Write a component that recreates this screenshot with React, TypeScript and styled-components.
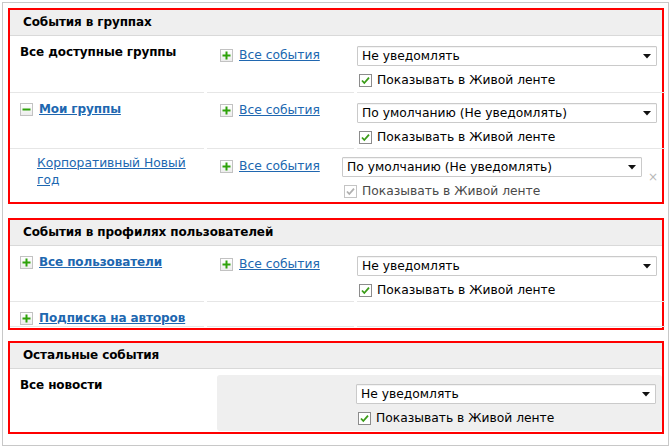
import React from "react";
import styled, { createGlobalStyle } from "styled-components";

const GlobalStyle = createGlobalStyle`
  html, body { margin: 0; padding: 0; background: #fff; }
  body {
    font-family: "DejaVu Sans", Verdana, sans-serif;
    font-size: 12.3px;
    color: #000;
  }
`;

const Page = styled.div`
  padding: 2px 0 0 2px;
`;

const Frame = styled.div`
  box-sizing: border-box;
  width: 667px;
  height: 444px;
  border: 1px solid #c8c8c8;
  padding: 5px 4px 0 5px;
`;

const Section = styled.section<{ $gap: number }>`
  border: 2px solid #ff0000;
  margin-bottom: ${(p) => p.$gap}px;
`;

const Header = styled.div`
  height: 25px;
  line-height: 25px;
  background: #efefef;
  border-bottom: 1px solid #d9d9d9;
  padding-left: 13px;
  font-weight: bold;
  font-size: 12px;
  letter-spacing: -0.1px;
`;

const Row = styled.div<{ $h: number }>`
  display: grid;
  grid-template-columns: 194px 147px 308px;
  column-gap: 3px;
  height: ${(p) => p.$h}px;
  box-sizing: border-box;
`;

const Cell = styled.div<{ $line?: boolean; $pl?: number; $pt?: number }>`
  box-sizing: border-box;
  padding-left: ${(p) => p.$pl ?? 0}px;
  padding-top: ${(p) => p.$pt ?? 0}px;
  border-bottom: 1px solid ${(p) => (p.$line ? "#e6e6e6" : "transparent")};
`;

const Title = styled.span`
  font-weight: bold;
  font-size: 12px;
  letter-spacing: -0.1px;
  line-height: 16px;
`;

const Link = styled.a<{ $bold?: boolean }>`
  color: #2067b0;
  text-decoration: underline;
  font-weight: ${(p) => (p.$bold ? "bold" : "normal")};
  font-size: ${(p) => (p.$bold ? "12px" : "inherit")};
  letter-spacing: ${(p) => (p.$bold ? "-0.1px" : "0")};
  line-height: 16px;
  cursor: pointer;
`;

const IconLine = styled.div`
  display: flex;
  align-items: center;
  gap: 6px;
  height: 16px;
`;

const WrapLink = styled(Link)`
  display: block;
  max-width: 158px;
  line-height: 17px;
`;

const ToggleBox = styled.span`
  display: inline-flex;
  width: 13px;
  height: 13px;
  box-sizing: border-box;
  border: 1px solid #c2c2c2;
  background: linear-gradient(#ffffff, #ededed);
  align-items: center;
  justify-content: center;
  flex: none;
`;

const Controls = styled.div<{ $shift?: number }>`
  margin-left: ${(p) => -(p.$shift ?? 0)}px;
  display: flex;
  flex-direction: column;
  gap: 7px;
`;

const SelectLine = styled.div`
  display: flex;
  align-items: flex-end;
`;

const SelectBox = styled.div`
  box-sizing: border-box;
  width: 300px;
  height: 20px;
  border: 1px solid #cacaca;
  border-radius: 1px;
  background: #fff;
  display: flex;
  align-items: center;
  justify-content: space-between;
  padding: 0 5px 0 4px;
  line-height: 18px;
  box-shadow: inset 0 1px 0 #f3f3f3;
`;

const Remove = styled.span`
  color: #b8b8b8;
  font-size: 12px;
  margin-left: 6px;
  margin-bottom: -6px;
  line-height: 12px;
`;

const CheckLine = styled.label<{ $disabled?: boolean }>`
  display: flex;
  align-items: center;
  gap: 5px;
  height: 14px;
  padding-left: 2px;
  color: ${(p) => (p.$disabled ? "#4a4a4a" : "#000")};
`;

const GrayPanel = styled.div`
  grid-column: 2 / 4;
  margin: 6px 3px 0 10px;
  background: #efefef;
  border-radius: 3px;
  padding: 9px 0 0 139px;
  height: 56px;
  box-sizing: border-box;
`;

const Plus = () => (
  <ToggleBox>
    <svg width="9" height="9" viewBox="0 0 9 9">
      <path d="M4.5 0.5V8.5M0.5 4.5H8.5" stroke="#2ea20a" strokeWidth="2" />
    </svg>
  </ToggleBox>
);

const Minus = () => (
  <ToggleBox>
    <svg width="9" height="9" viewBox="0 0 9 9">
      <path d="M0.5 4.5H8.5" stroke="#2ea20a" strokeWidth="2" />
    </svg>
  </ToggleBox>
);

const Arrow = () => (
  <svg width="8" height="5" viewBox="0 0 8 5">
    <path d="M0 0H8L4 4.5Z" fill="#111" />
  </svg>
);

const Check = ({ disabled }: { disabled?: boolean }) => (
  <svg width="13" height="13" viewBox="0 0 13 13" style={{ flex: "none" }}>
    <rect
      x="0.5"
      y="0.5"
      width="12"
      height="12"
      fill="#fff"
      stroke={disabled ? "#c4c4c4" : "#8c8c8c"}
    />
    <path
      d="M3 6.5L5.3 9L10 3.6"
      fill="none"
      stroke={disabled ? "#b0b0b0" : "#3a9c17"}
      strokeWidth="1.8"
    />
  </svg>
);

const Notify = ({
  value,
  shift,
  disabled,
  removable,
}: {
  value: string;
  shift?: number;
  disabled?: boolean;
  removable?: boolean;
}) => (
  <Controls $shift={shift}>
    <SelectLine>
      <SelectBox>
        <span>{value}</span>
        <Arrow />
      </SelectBox>
      {removable && <Remove>×</Remove>}
    </SelectLine>
    <CheckLine $disabled={disabled}>
      <Check disabled={disabled} />
      <span>Показывать в Живой ленте</span>
    </CheckLine>
  </Controls>
);

const AllEvents = () => (
  <IconLine>
    <Plus />
    <Link>Все события</Link>
  </IconLine>
);

export default function App() {
  return (
    <>
      <GlobalStyle />
      <Page>
        <Frame>
          <Section $gap={14}>
            <Header>События в группах</Header>
            <Row $h={57}>
              <Cell $line $pl={10} $pt={8}>
                <Title>Все доступные группы</Title>
              </Cell>
              <Cell $line $pl={13} $pt={11}>
                <AllEvents />
              </Cell>
              <Cell $line $pt={10}>
                <Notify value="Не уведомлять" />
              </Cell>
            </Row>
            <Row $h={56}>
              <Cell $line $pl={10} $pt={8}>
                <IconLine>
                  <Minus />
                  <Link $bold>Мои группы</Link>
                </IconLine>
              </Cell>
              <Cell $line $pl={13} $pt={9}>
                <AllEvents />
              </Cell>
              <Cell $line $pt={10}>
                <Notify value="По умолчанию (Не уведомлять)" />
              </Cell>
            </Row>
            <Row $h={53}>
              <Cell $pl={27} $pt={6}>
                <WrapLink>Корпоративный Новый год</WrapLink>
              </Cell>
              <Cell $pl={13} $pt={9}>
                <AllEvents />
              </Cell>
              <Cell $pt={8}>
                <Notify
                  value="По умолчанию (Не уведомлять)"
                  shift={15}
                  disabled
                  removable
                />
              </Cell>
            </Row>
          </Section>

          <Section $gap={11}>
            <Header>События в профилях пользователей</Header>
            <Row $h={56}>
              <Cell $line $pl={10} $pt={8}>
                <IconLine>
                  <Plus />
                  <Link $bold>Все пользователи</Link>
                </IconLine>
              </Cell>
              <Cell $line $pl={13} $pt={10}>
                <AllEvents />
              </Cell>
              <Cell $line $pt={10}>
                <Notify value="Не уведомлять" />
              </Cell>
            </Row>
            <Row $h={24}>
              <Cell $line $pl={10} $pt={8}>
                <IconLine>
                  <Plus />
                  <Link $bold>Подписка на авторов</Link>
                </IconLine>
              </Cell>
              <Cell $line />
              <Cell $line />
            </Row>
            <Row $h={2} />
          </Section>

          <Section $gap={0}>
            <Header>Остальные события</Header>
            <Row $h={63}>
              <Cell $pl={10} $pt={8}>
                <Title>Все новости</Title>
              </Cell>
              <GrayPanel>
                <Notify value="Не уведомлять" />
              </GrayPanel>
            </Row>
          </Section>
        </Frame>
      </Page>
    </>
  );
}
